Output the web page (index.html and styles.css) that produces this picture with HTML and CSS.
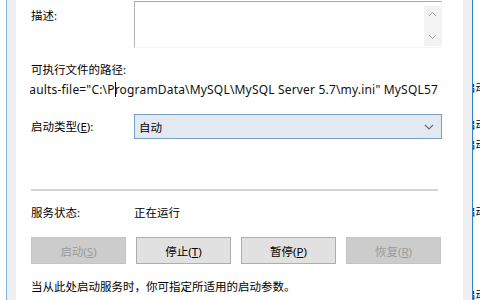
FILE: index.html
```html
<!DOCTYPE html>
<html lang="zh-CN">
<head>
    <meta charset="UTF-8">
    <title>MySQL57 属性</title>
    <link rel="stylesheet" href="styles.css">
</head>
<body>
    <div class="screen">
        <div class="dialog">
            <div class="page">
                <div class="row desc-row">
                    <div class="label">描述:</div>
                    <div class="textarea">
                        <div class="scrollbar">
                            <svg width="9" height="6" viewBox="0 0 9 6"><path d="M1 5 L4.5 1.5 L8 5" fill="none" stroke="#a6a6a6" stroke-width="1"/></svg>
                            <svg width="9" height="6" viewBox="0 0 9 6"><path d="M1 1 L4.5 4.5 L8 1" fill="none" stroke="#a6a6a6" stroke-width="1"/></svg>
                        </div>
                    </div>
                </div>

                <div class="label path-label">可执行文件的路径:</div>
                <div class="path">
                    <span>--defaults-file="C:\P<span class="caret"></span>rogramData\MySQL\MySQL Server 5.7\my.ini" MySQL57</span>
                </div>

                <div class="row combo-row">
                    <div class="label">启动类型(<u>E</u>):</div>
                    <div class="combo">
                        <span>自动</span>
                        <svg width="10" height="6" viewBox="0 0 10 6"><path d="M1 1 L5 5 L9 1" fill="none" stroke="#6d6d6d" stroke-width="1.2"/></svg>
                    </div>
                </div>

                <div class="separator"></div>

                <div class="row status-row">
                    <div class="label">服务状态:</div>
                    <div>正在运行</div>
                </div>

                <div class="buttons">
                    <button class="btn" disabled>启动(<u>S</u>)</button>
                    <button class="btn">停止(<u>T</u>)</button>
                    <button class="btn">暂停(<u>P</u>)</button>
                    <button class="btn" disabled>恢复(<u>R</u>)</button>
                </div>

                <div class="hint">当从此处启动服务时，你可指定所适用的启动参数。</div>
            </div>
        </div>

        <!-- bits of the window behind -->
        <div class="behind">
            <div class="frag f1">启动</div>
            <div class="frag f2">启动</div>
            <div class="frag f3">启动</div>
            <div class="frag f4">启动</div>
            <div class="frag f5">启动</div>
        </div>
    </div>
</body>
</html>
```

FILE: styles.css
```css
body {
    margin: 0;
    padding: 0;
    background: #ffffff;
    font-family: "Noto Sans", "Noto Sans CJK SC", sans-serif;
    font-size: 11.5px;
    color: #000;
}
.screen {
    display: flex;
    width: 480px;
    height: 300px;
    overflow: hidden;
    padding-left: 6px;
    box-sizing: border-box;
}
.dialog {
    flex: none;
    width: 467px;
    height: 300px;
    box-sizing: border-box;
    background: #f0f0f0;
    border-left: 1px solid #7fb1e3;
    border-right: 1px solid #2f80d2;
    padding: 0 9px;
}
.page {
    background: #ffffff;
    height: 100%;
    padding: 1px 0 0 15px;
    box-sizing: border-box;
}
.row {
    display: flex;
}
.label {
    width: 103px;
    flex: none;
    line-height: 16px;
    white-space: nowrap;
}
.desc-row .label {
    padding-top: 7px;
}
.textarea {
    width: 308px;
    height: 47px;
    box-sizing: border-box;
    border-top: 1px solid #a9a9a9;
    border-left: 1px solid #b4b4b4;
    border-right: 1px solid #f4f4f4;
    border-bottom: 1px solid #f4f4f4;
    display: flex;
    justify-content: flex-end;
    padding: 4px 0 1px;
}
.scrollbar {
    width: 17px;
    background: #f3f3f3;
    border-radius: 2px;
    display: flex;
    flex-direction: column;
    justify-content: space-between;
    align-items: center;
    padding: 5px 0 6px;
    box-sizing: border-box;
}
.scrollbar svg {
    display: block;
}
.path-label {
    margin-top: 14px;
}
.path {
    margin-top: 4px;
    margin-left: -1px;
    width: 408px;
    height: 16px;
    line-height: 16px;
    overflow: hidden;
    display: flex;
    justify-content: flex-end;
    white-space: nowrap;
    font-size: 12px;
    letter-spacing: 0.18px;
    color: #111;
}
.caret {
    display: inline-block;
    width: 1px;
    height: 15px;
    background: #000;
    vertical-align: -3px;
    margin: 0 -1px 0 0;
}
.combo-row {
    margin-top: 16px;
    height: 25px;
}
.combo-row .label {
    line-height: 25px;
}
.combo {
    width: 308px;
    height: 25px;
    box-sizing: border-box;
    background: #e2e9f1;
    border: 1px solid #7b9ec3;
    display: flex;
    align-items: center;
    justify-content: space-between;
    padding: 0 7px 0 4px;
}
.separator {
    margin-top: 50px;
    width: 407px;
    height: 2px;
    background: #d4d4d4;
}
.status-row {
    margin-top: 14px;
    line-height: 16px;
}
.buttons {
    display: flex;
    gap: 10px;
    margin-top: 16px;
}
.btn {
    width: 95px;
    height: 27px;
    box-sizing: border-box;
    background: #e1e1e1;
    border: 1px solid #adadad;
    font-family: inherit;
    font-size: 11.5px;
    color: #000;
    padding: 0;
}
.btn:disabled {
    background: #cccccc;
    border-color: #c4c4c4;
    color: #9b9b9b;
}
.hint {
    margin-top: 15px;
    line-height: 16px;
    white-space: nowrap;
}
.behind {
    flex: none;
    width: 7px;
    overflow: hidden;
}
.frag {
    margin-left: -9px;
    line-height: 16px;
    font-size: 11.5px;
    white-space: nowrap;
}
.f1 { margin-top: 80px; }
.f2 { margin-top: 21px; }
.f3 { margin-top: 4px; }
.f4 { margin-top: 51px; }
.f5 { margin-top: 67px; }
```
